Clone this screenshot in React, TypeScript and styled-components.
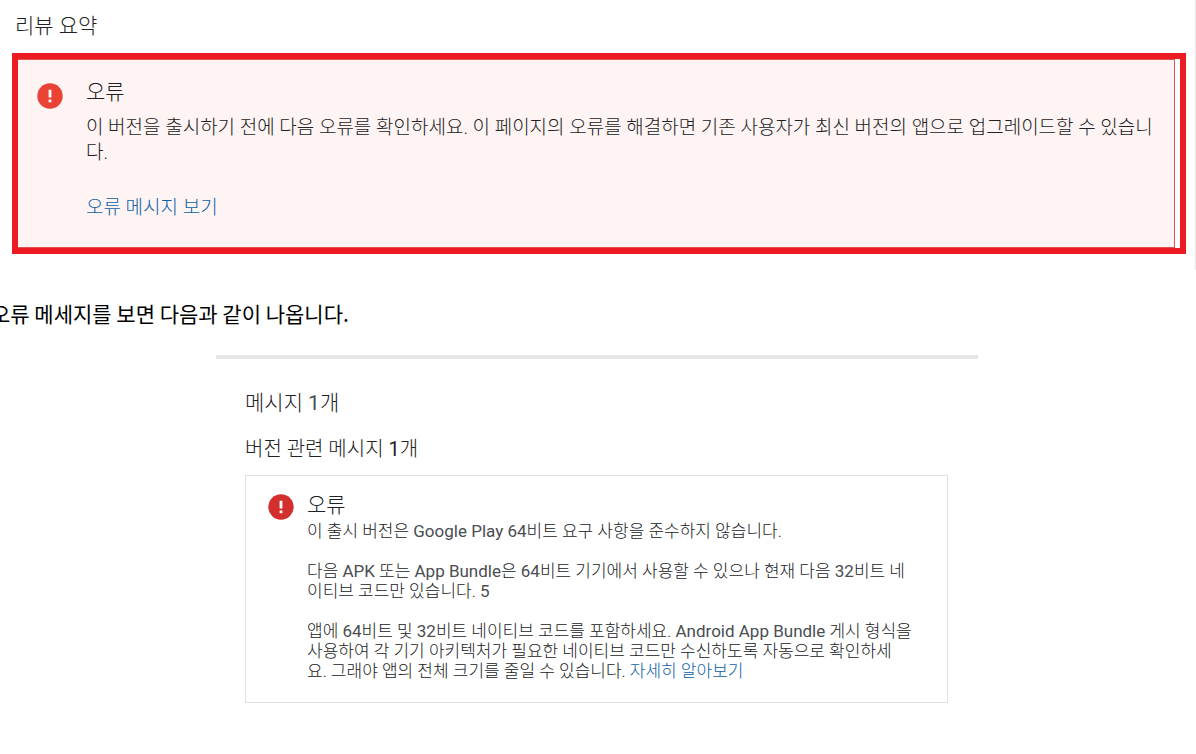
import React from "react";
import styled, { createGlobalStyle } from "styled-components";

const GlobalStyle = createGlobalStyle`
  * { box-sizing: border-box; }
  body {
    margin: 0;
    background: #fff;
    color: #202124;
    font-family: Roboto, "Noto Sans CJK KR", sans-serif;
    font-weight: 300;
    overflow-x: hidden;
  }
  h2, h3, h4, p { margin: 0; font-weight: inherit; }
`;

const Article = styled.main`
  display: flex;
  flex-direction: column;
`;

const Summary = styled.section`
  padding: 12px 9px 16px 12px;
  border-right: 1px solid #e8e8e8;
`;

const SummaryTitle = styled.h2`
  padding-left: 3px;
  font-size: 21px;
  line-height: 28px;
`;

const Highlight = styled.div`
  margin-top: 13px;
  padding-right: 5px;
  border: 6px solid #ed1c24;
`;

const ErrorPanel = styled.div`
  display: flex;
  gap: 23px;
  padding: 18px 20px 27px 19px;
  border: 1px solid #e05550;
  border-left: 0;
  background: #fef4f3;
`;

const PanelTitle = styled.h3`
  font-size: 21px;
  line-height: 28px;
`;

const PanelText = styled.p`
  margin: 9px 0 30px;
  font-size: 19px;
  line-height: 25px;
`;

const Link = styled.a`
  color: #0b60a8;
  text-decoration: none;
`;

const PanelLink = styled(Link)`
  display: block;
  font-size: 19px;
  line-height: 25px;
`;

const Icon = styled.svg`
  flex: none;
  width: 26px;
  height: 26px;
  margin-top: 5px;
`;

const Caption = styled.p`
  margin: 27px 0 26px -9px;
  color: #000;
  font-family: "Noto Sans CJK KR", sans-serif;
  font-weight: 400;
  font-size: 21px;
  line-height: 32px;
`;

const Messages = styled.section`
  width: calc(100% - 434px);
  min-width: 762px;
  margin-left: 216px;
  padding: 30px 30px 50px 29px;
  border-top: 4px solid #e6e6e6;
`;

const MessageCount = styled.h2`
  font-size: 21px;
  line-height: 28px;
`;

const GroupTitle = styled.h3`
  margin: 18px 0 12px;
  font-size: 20px;
  line-height: 28px;
`;

const Card = styled.div`
  display: flex;
  gap: 13px;
  padding: 13px 28px 21px 22px;
  border: 1px solid #e0e0e0;
`;

const CardTitle = styled.h4`
  font-size: 21px;
  line-height: 32px;
`;

const CardText = styled.p`
  font-size: 17px;
  line-height: 20px;

  & + & { margin-top: 20px; }
`;

const Latin = styled.span`
  color: #4a4d51;
  font-weight: 400;
`;

function ErrorIcon({ color }: { color: string }) {
  return (
    <Icon viewBox="0 0 26 26" aria-hidden="true">
      <circle cx="13" cy="13" r="12.7" fill={color} />
      <path d="M11.6 6.8h2.8v7.6h-2.8zM11.6 16.6h2.8v2.6h-2.8z" fill="#fff" />
    </Icon>
  );
}

export default function App() {
  return (
    <>
      <GlobalStyle />
      <Article>
        <Summary>
          <SummaryTitle>리뷰 요약</SummaryTitle>
          <Highlight>
            <ErrorPanel>
              <ErrorIcon color="#ea4335" />
              <div>
                <PanelTitle>오류</PanelTitle>
                <PanelText>
                  이 버전을 출시하기 전에 다음 오류를 확인하세요. 이 페이지의 오류를 해결하면 기존 사용자가 최신 버전의 앱으로 업그레이드할 수 있습니다.
                </PanelText>
                <PanelLink href="#messages">오류 메시지 보기</PanelLink>
              </div>
            </ErrorPanel>
          </Highlight>
        </Summary>
        <Caption>오류 메세지를 보면 다음과 같이 나옵니다.</Caption>
        <Messages id="messages">
          <MessageCount>
            메시지 <Latin>1</Latin>개
          </MessageCount>
          <GroupTitle>
            버전 관련 메시지 <b>1</b>개
          </GroupTitle>
          <Card>
            <ErrorIcon color="#d32f2f" />
            <div>
              <CardTitle>오류</CardTitle>
              <CardText>
                이 출시 버전은 <Latin>Google Play 64</Latin>비트 요구 사항을 준수하지 않습니다.
              </CardText>
              <CardText>
                다음 <Latin>APK</Latin> 또는 <Latin>App Bundle</Latin>은 <Latin>64</Latin>비트 기기에서 사용할 수 있으나 현재 다음 <Latin>32</Latin>비트 네
                <br />
                이티브 코드만 있습니다. <Latin>5</Latin>
              </CardText>
              <CardText>
                앱에 <Latin>64</Latin>비트 및 <Latin>32</Latin>비트 네이티브 코드를 포함하세요. <Latin>Android App Bundle</Latin> 게시 형식을
                <br />
                사용하여 각 기기 아키텍처가 필요한 네이티브 코드만 수신하도록 자동으로 확인하세
                <br />
                요. 그래야 앱의 전체 크기를 줄일 수 있습니다. <Link href="#learn-more">자세히 알아보기</Link>
              </CardText>
            </div>
          </Card>
        </Messages>
      </Article>
    </>
  );
}
